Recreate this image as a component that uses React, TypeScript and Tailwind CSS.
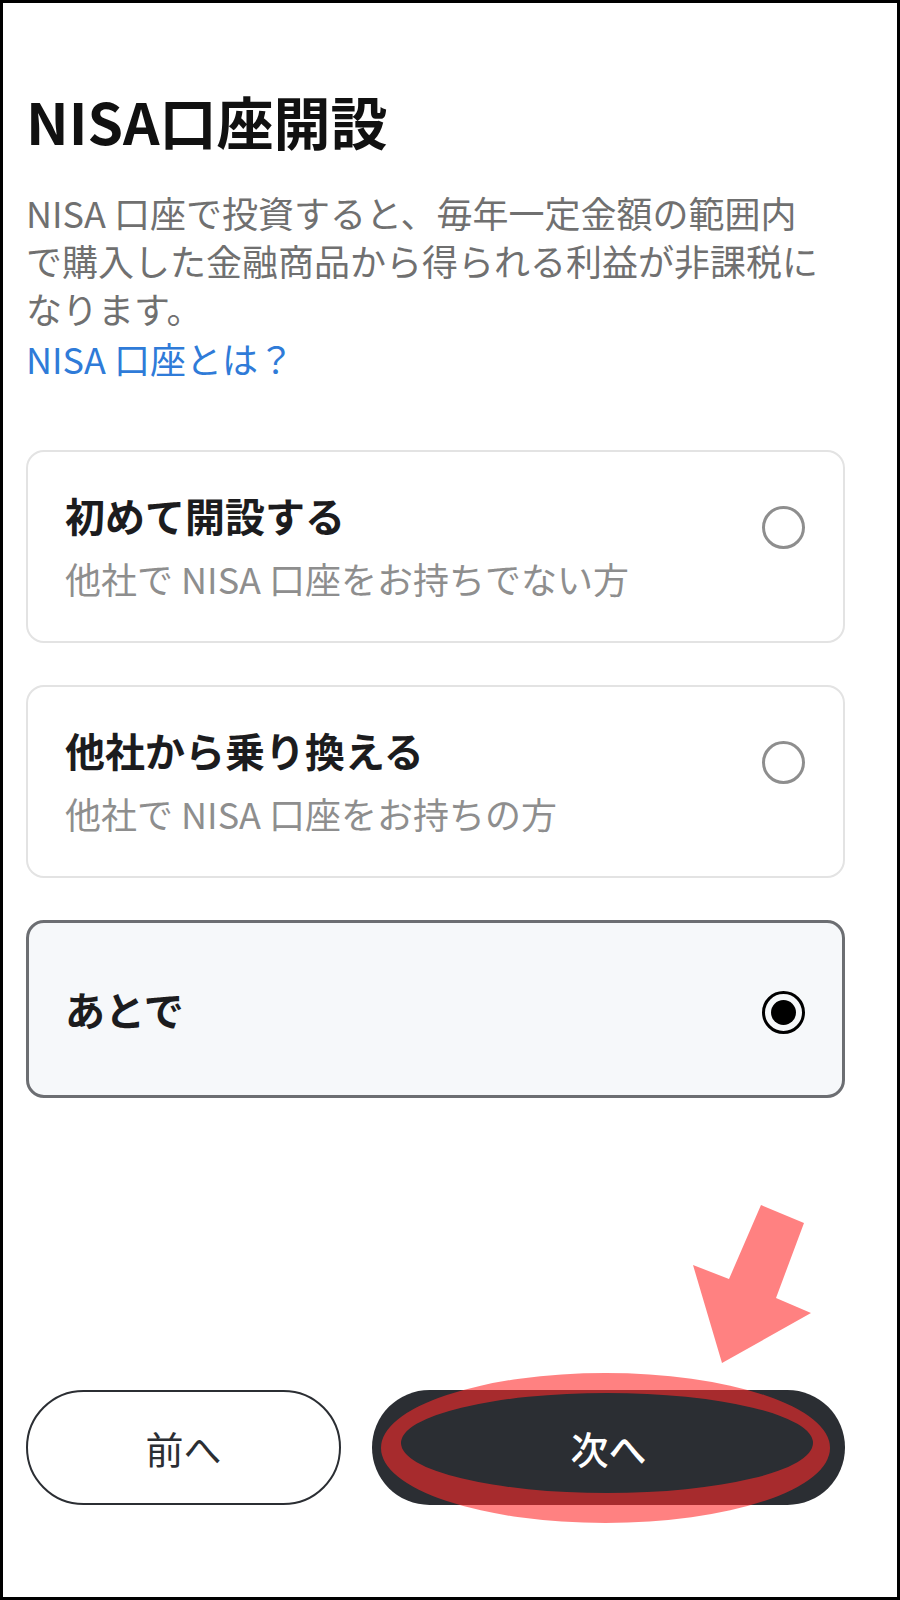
import React from "react";

function Radio({ selected }: { selected?: boolean }) {
  if (selected) {
    return (
      <div className="w-[43px] h-[43px] rounded-full border-[3px] border-black flex items-center justify-center shrink-0">
        <div className="w-[25px] h-[25px] rounded-full bg-black" />
      </div>
    );
  }
  return <div className="w-[43px] h-[43px] rounded-full border-[3px] border-[#8e8e8e] shrink-0" />;
}

export default function App() {
  return (
    <div className="relative w-[900px] h-[1600px] bg-white font-[family-name:'Noto_Sans_CJK_JP','Noto_Sans',sans-serif]">
      <div className="w-full h-full border-[3px] border-black flex flex-col pt-[85px] pl-[23px] pr-[52px] pb-[92px]">
        <h1 className="text-[57px] leading-[64px] font-bold text-[#111111]">NISA口座開設</h1>
        <p className="mt-[36px] w-[805px] text-[36px] leading-[48px] text-[#707070]">
          NISA 口座で投資すると、毎年一定金額の範囲内で購入した金融商品から得られる利益が非課税になります。
        </p>
        <a className="mt-[2px] text-[36px] leading-[48px] text-[#2f7bd8]">NISA 口座とは？</a>

        <div className="mt-[68px] flex flex-col gap-[42px]">
          <div className="border-2 border-[#e3e3e3] rounded-[18px] bg-white pl-[37px] pr-[38px] py-[37px] flex items-start">
            <div className="flex-1 flex flex-col gap-[11px]">
              <div className="text-[40px] leading-[52px] font-bold text-[#1c1c1e]">初めて開設する</div>
              <div className="text-[36px] leading-[52px] text-[#8e8e8e]">他社で NISA 口座をお持ちでない方</div>
            </div>
            <div className="mt-[17px]">
              <Radio />
            </div>
          </div>

          <div className="border-2 border-[#e3e3e3] rounded-[18px] bg-white pl-[37px] pr-[38px] py-[37px] flex items-start">
            <div className="flex-1 flex flex-col gap-[11px]">
              <div className="text-[40px] leading-[52px] font-bold text-[#1c1c1e]">他社から乗り換える</div>
              <div className="text-[36px] leading-[52px] text-[#8e8e8e]">他社で NISA 口座をお持ちの方</div>
            </div>
            <div className="mt-[17px]">
              <Radio />
            </div>
          </div>

          <div className="border-[3px] border-[#6c6e72] rounded-[18px] bg-[#f6f8fa] pl-[36px] pr-[37px] py-[60px] flex items-center">
            <div className="flex-1 text-[40px] leading-[52px] font-bold text-[#1c1c1e]">あとで</div>
            <div className="mt-[6px]">
              <Radio selected />
            </div>
          </div>
        </div>

        <div className="mt-auto flex gap-[31px] h-[115px]">
          <button className="w-[315px] h-full rounded-full border-2 border-[#2b2e33] bg-white text-[38px] text-[#2b2e33] flex items-center justify-center">
            前へ
          </button>
          <button className="flex-1 h-full rounded-full bg-[#2b2e33] text-[38px] font-medium text-white flex items-center justify-center">
            次へ
          </button>
        </div>
      </div>

      <svg className="absolute left-0 top-0 pointer-events-none" width="900" height="1600" viewBox="0 0 900 1600">
        <polygon
          points="761,1205 804,1223 776,1298 811,1313 722,1363 693,1265 729,1279"
          fill="rgba(255,40,40,0.59)"
        />
        <path
          fillRule="evenodd"
          fill="rgba(255,40,40,0.59)"
          d="M 381 1448 A 224.5 75 0 1 0 830 1448 A 224.5 75 0 1 0 381 1448 Z M 401 1443 A 206 50 0 1 0 813 1443 A 206 50 0 1 0 401 1443 Z"
        />
      </svg>
    </div>
  );
}
